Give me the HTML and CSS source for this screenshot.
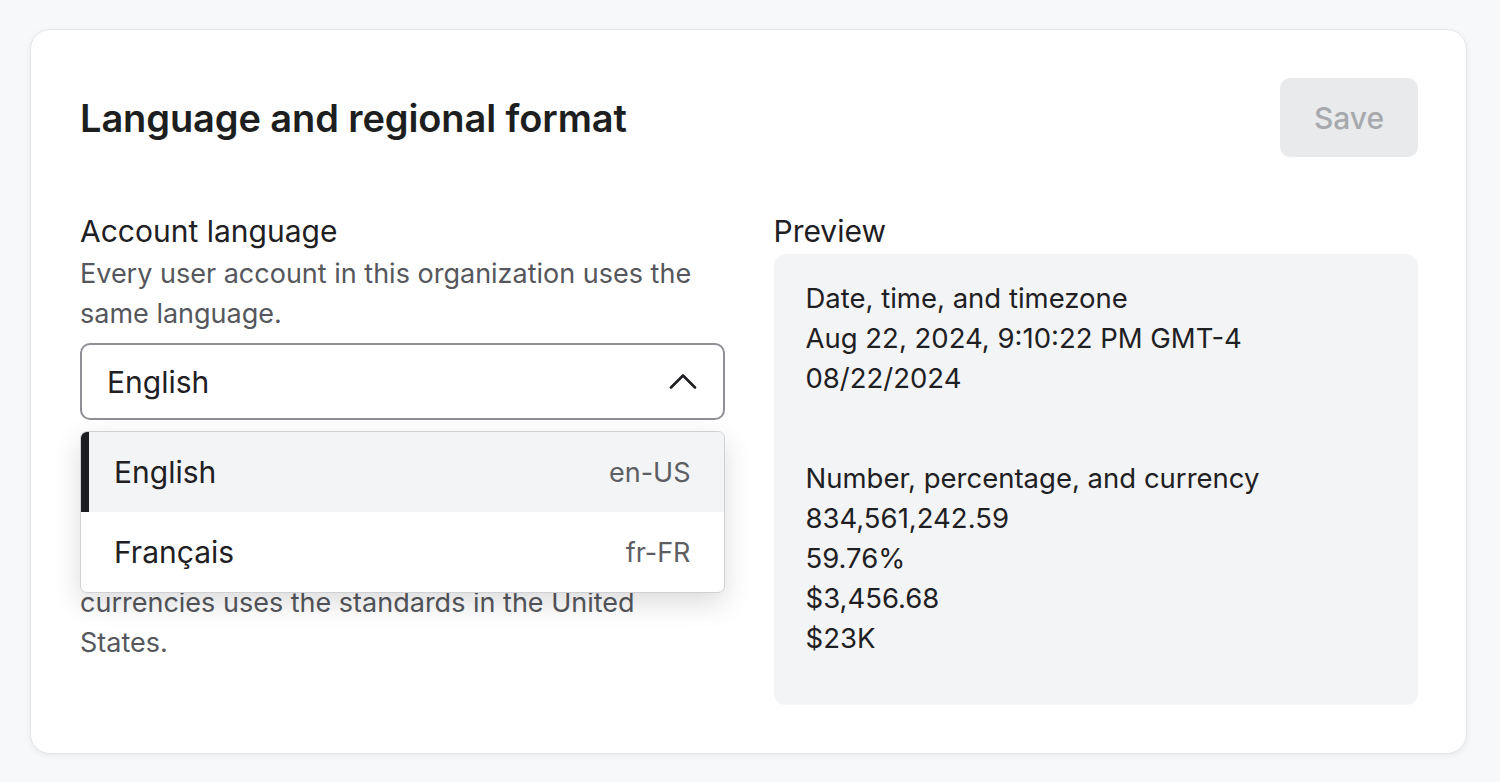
FILE: index.html
```html
<!DOCTYPE html>
<html lang="en">
<head>
<meta charset="utf-8">
<title>Language and regional format</title>
<link rel="stylesheet" href="styles.css">
</head>
<body>
<div class="card">
  <div class="header">
    <h1 class="title">Language and regional format</h1>
    <button class="save" disabled>Save</button>
  </div>
  <div class="columns">
    <div class="col">
      <div class="label">Account language</div>
      <p class="desc">Every user account in this organization uses the same language.</p>
      <div class="select-wrap">
        <div class="select">
          <span class="select-value">English</span>
          <svg class="chevron" width="28" height="16" viewBox="0 0 28 16" fill="none"><path d="M2 14.5 L14 2.5 L26 14.5" stroke="#1f2023" stroke-width="2.6" stroke-linecap="round" stroke-linejoin="round"/></svg>
        </div>
        <ul class="menu">
          <li class="option selected"><span class="opt-name">English</span><span class="opt-code">en-US</span></li>
          <li class="option"><span class="opt-name">Français</span><span class="opt-code">fr-FR</span></li>
        </ul>
      </div>
      <div class="label second">Regional format</div>
      <p class="desc">The formatting of dates, times, numbers, and currencies uses the standards in the United States.</p>
    </div>
    <div class="col">
      <div class="label">Preview</div>
      <div class="preview">
        <div class="group">
          <div>Date, time, and timezone</div>
          <div>Aug 22, 2024, 9:10:22 PM GMT-4</div>
          <div>08/22/2024</div>
        </div>
        <div class="group">
          <div>Number, percentage, and currency</div>
          <div>834,561,242.59</div>
          <div>59.76%</div>
          <div>$3,456.68</div>
          <div>$23K</div>
        </div>
      </div>
    </div>
  </div>
</div>
</body>
</html>
```

FILE: styles.css
```css
* { box-sizing: border-box; }
html, body { margin: 0; }
body {
  background: #f7f8f9;
  font-family: Inter, "Noto Sans", "Liberation Sans", sans-serif;
  color: #1f2023;
  padding: 29px 33px 28px 30px;
}
.card {
  background: #ffffff;
  border: 1px solid #e4e5e8;
  border-radius: 20px;
  box-shadow: 0 2px 6px rgba(0, 0, 0, 0.06);
  padding: 48px 48px 48px 49px;
}
.header {
  display: flex;
  justify-content: space-between;
  align-items: center;
}
.title {
  margin: 0;
  font-size: 38px;
  line-height: 46px;
  font-weight: 600;
  letter-spacing: -0.1px;
  color: #1d1e20;
}
.save {
  width: 138px;
  height: 79px;
  border: none;
  border-radius: 10px;
  background: #e9eaec;
  color: #a7a9ad;
  font-family: inherit;
  font-size: 30px;
  font-weight: 500;
}
.columns {
  display: grid;
  grid-template-columns: 1fr 1fr;
  column-gap: 49px;
  margin-top: 56px;
}
.label {
  font-size: 30px;
  line-height: 36px;
  margin-bottom: 5px;
  color: #1f2023;
}
.label.second { margin-top: 82px; }
.desc {
  margin: 0;
  font-size: 27px;
  line-height: 40px;
  color: #55575c;
}
.select-wrap {
  position: relative;
  margin-top: 9px;
}
.select {
  height: 77px;
  border: 2px solid #8f9095;
  border-radius: 10px;
  display: flex;
  align-items: center;
  justify-content: space-between;
  padding: 0 26px 0 25px;
}
.select-value { font-size: 30px; }
.chevron { display: block; margin-top: -2px; }
.menu {
  position: absolute;
  top: 88px;
  left: 0;
  right: 0;
  margin: 0;
  padding: 0;
  list-style: none;
  background: #ffffff;
  border: 1px solid #cfd1d5;
  border-radius: 7px;
  overflow: hidden;
  box-shadow: 0 10px 28px rgba(0, 0, 0, 0.14);
  z-index: 2;
}
.option {
  height: 80px;
  display: flex;
  align-items: center;
  justify-content: space-between;
  padding: 0 33px 0 33px;
  font-size: 30px;
}
.option.selected {
  background: #f3f4f6;
  border-left: 8px solid #1c1d20;
  padding-left: 25px;
}
.opt-code {
  font-size: 27px;
  color: #5c5e63;
}
.preview {
  background: #f3f4f6;
  border-radius: 12px;
  padding: 24px 32px 47px 32px;
  font-size: 27.5px;
  line-height: 40px;
  color: #1f2023;
}
.group + .group { margin-top: 60px; }
```
